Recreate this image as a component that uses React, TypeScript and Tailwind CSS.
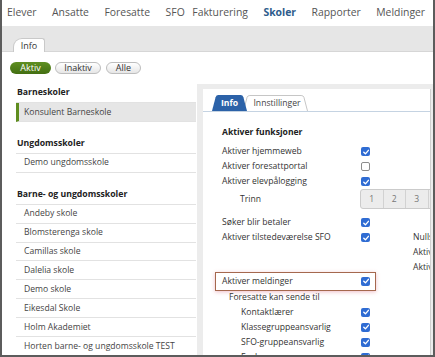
import type { ReactNode } from 'react';

const navItems = ['Elever', 'Ansatte', 'Foresatte', 'SFO', 'Fakturering', 'Skoler', 'Rapporter', 'Meldinger'];

const schools = [
  'Andeby skole',
  'Blomsterenga skole',
  'Camillas skole',
  'Dalelia skole',
  'Demo skole',
  'Eikesdal Skole',
  'Holm Akademiet',
  'Horten barne- og ungdomsskole TEST',
];

function Check({ on = true }: { on?: boolean }) {
  if (!on) return <span className="block w-[9px] h-[9px] rounded-[2px] border border-[#8c8c8c] bg-white shrink-0" />;
  return (
    <span className="flex w-[9px] h-[9px] rounded-[2px] bg-[#2f6cd3] items-center justify-center shrink-0">
      <svg viewBox="0 0 10 10" className="w-[8px] h-[8px]">
        <path d="M2.2 5.3 4.3 7.3 8 2.9" fill="none" stroke="white" strokeWidth="1.7" strokeLinecap="round" strokeLinejoin="round" />
      </svg>
    </span>
  );
}

function Row({ children, on, className = '' }: { children: ReactNode; on?: boolean; className?: string }) {
  return (
    <div className="flex items-center h-[15px]">
      <div className={`w-[139px] shrink-0 whitespace-nowrap ${className}`}>{children}</div>
      {on !== undefined && <Check on={on} />}
    </div>
  );
}

function Section({ title, items, selected }: { title: string; items: string[]; selected?: string }) {
  return (
    <div>
      <div className="h-[19px] flex items-center pl-px font-bold text-[8.7px] text-[#222] border-b border-[#e2e2e2]">{title}</div>
      {items.map((s) => (
        <div
          key={s}
          className={`h-[18.9px] flex items-center text-[8.6px] text-[#444] border-b border-[#e2e2e2] ${
            s === selected ? 'bg-[#e6e6e6] border-l-[3px] border-l-[#5f8d1f] pl-[5px]' : 'pl-[8px]'
          }`}
        >
          {s}
        </div>
      ))}
    </div>
  );
}

export default function App() {
  return (
    <div className="w-[435px] h-[357px] overflow-hidden bg-white border-l-2 border-r-2 border-b-2 border-[#5c5c5c] flex flex-col font-['Open_Sans',sans-serif]">
      <nav className="h-[26px] shrink-0 flex items-center pl-[5px] gap-[15.5px] text-[10.4px] text-[#555] whitespace-nowrap">
        {navItems.map((n) => (
          <span
            key={n}
            className={`${n === 'Skoler' ? 'font-bold text-[#2e5c8c]' : ''} ${n === 'Fakturering' ? '-ml-[8px]' : ''}`}
          >
            {n}
          </span>
        ))}
      </nav>

      <div className="h-[26px] shrink-0 bg-[#e6e6e6] border-b border-[#d6d6d6] flex items-end pl-[11px]">
        <div className="h-[14px] w-[32px] -mb-px bg-white border border-b-0 border-[#c9c9c9] rounded-tl-[9px] rounded-tr-[3px] flex items-center justify-center text-[9px] text-[#333]">
          Info
        </div>
      </div>

      <div className="mt-[10px] ml-[8px] flex gap-[4px] h-[12px] text-[9px]">
        <span className="w-[41px] rounded-full bg-gradient-to-b from-[#5f8f22] to-[#436f12] text-white flex items-center justify-center">
          Aktiv
        </span>
        <span className="w-[46px] rounded-full border border-[#bdbdbd] bg-gradient-to-b from-white to-[#e6e6e6] text-[#333] flex items-center justify-center">
          Inaktiv
        </span>
        <span className="ml-px w-[35px] rounded-full border border-[#bdbdbd] bg-gradient-to-b from-white to-[#e6e6e6] text-[#333] flex items-center justify-center">
          Alle
        </span>
      </div>

      <div className="mt-[10px] flex-1 min-h-0 flex">
        <div className="w-[195px] shrink-0 pl-[14px] pr-px flex flex-col gap-[13px]">
          <Section title="Barneskoler" items={['Konsulent Barneskole']} selected="Konsulent Barneskole" />
          <Section title="Ungdomsskoler" items={['Demo ungdomsskole']} />
          <Section title="Barne- og ungdomsskoler" items={schools} />
        </div>

        <div className="flex-1 min-w-0 bg-[#ececec] pt-[5px] pl-[6px] pr-[2px] flex">
          <div className="flex-1 min-w-0 bg-white border-r border-[#cfcfcf] overflow-hidden text-[8.6px] text-[#333]">
            <div className="h-[23px] pl-[9px] border-b border-[#c5d3e2] flex items-end">
              <div className="relative z-10 w-[35px] h-[16px] flex items-center justify-center font-bold text-white">
                <svg viewBox="0 0 35 16" className="absolute inset-0 w-full h-full" preserveAspectRatio="none">
                  <path d="M0 16 3.6 2.2Q4.2 0 6.4 0H28.6Q30.8 0 31.4 2.2L35 16Z" fill="#2c62a8" />
                </svg>
                <span className="relative">Info</span>
              </div>
              <div className="relative -ml-[4px] w-[65px] h-[16px] flex items-center justify-center pl-[3px] text-[#444]">
                <svg viewBox="0 0 65 16" className="absolute inset-0 w-full h-full" preserveAspectRatio="none">
                  <path d="M0.5 16 4.1 2.2Q4.7 0.5 6.9 0.5H58.1Q60.3 0.5 60.9 2.2L64.5 16" fill="white" stroke="#c6c6c6" />
                </svg>
                <span className="relative">Innstillinger</span>
              </div>
            </div>

            <div className="pl-[19px]">
              <div className="mt-[13px] h-[15px] flex items-center font-bold text-[#222]">Aktiver funksjoner</div>
              <div className="mt-[4px]">
                <Row on>Aktiver hjemmeweb</Row>
                <Row on={false}>Aktiver foresattportal</Row>
                <Row on>Aktiver elevpålogging</Row>
                <div className="flex items-center h-[20px]">
                  <div className="w-[138px] shrink-0 pl-[18px]">Trinn</div>
                  <div className="flex shrink-0 h-[20px] border border-[#cbcbcb] rounded-l-[3px] bg-[#ececec] text-[#777] whitespace-nowrap">
                    {['1', '2', '3', '4'].map((t) => (
                      <span key={t} className="w-[22.5px] flex items-center justify-center border-r border-[#d2d2d2]">
                        {t}
                      </span>
                    ))}
                  </div>
                </div>
                <div className="mt-[6px]">
                  <Row on>Søker blir betaler</Row>
                </div>
                <div className="flex">
                  <div className="w-[148px] shrink-0">
                    <Row on>Aktiver tilstedeværelse SFO</Row>
                    <div className="mt-[26.5px] -ml-[7px] w-[161px] h-[19px] pl-[6px] flex items-center border border-[#a5684e] bg-white shadow-[0_1px_4px_rgba(220,110,130,0.45)]">
                      <div className="w-[139px] shrink-0">Aktiver meldinger</div>
                      <Check />
                    </div>
                    <div className="h-[14px] flex items-center pl-[7px]">Foresatte kan sende til</div>
                    <Row on className="pl-[19px]">Kontaktlærer</Row>
                    <Row on className="pl-[19px]">Klassegruppeansvarlig</Row>
                    <Row on className="pl-[19px]">SFO-gruppeansvarlig</Row>
                    <Row on className="pl-[19px]">Faglærer</Row>
                  </div>
                  <div className="ml-[43px] whitespace-nowrap">
                    <div className="h-[15px] flex items-center">Nullstill fravær</div>
                    <div className="h-[15px] flex items-center">Aktiver innsjekk</div>
                    <div className="h-[15px] flex items-center">Aktiver utsjekk</div>
                  </div>
                </div>
              </div>
            </div>
          </div>
        </div>
      </div>
    </div>
  );
}
